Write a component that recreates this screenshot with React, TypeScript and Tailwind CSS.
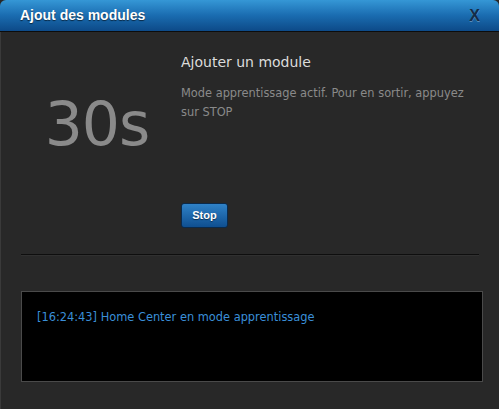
export default function App() {
	return (
		<div className="w-[499px] h-[409px] flex flex-col bg-[#282828] overflow-hidden" style={{ fontFamily: '"DejaVu Sans", Verdana, sans-serif' }}>
			{/* barre de titre */}
			<div className="h-[32px] shrink-0 flex items-center justify-between pl-[20px] pr-[19px] rounded-t-[6px] bg-gradient-to-b from-[#3597d6] via-[#1a6cb0] to-[#0d4a88] border-b border-[#0c0c0c]">
				<span className="text-white text-[14px] font-bold [text-shadow:0_1px_1px_rgba(0,0,0,0.6)]" style={{ fontFamily: '"Liberation Sans", Arial, sans-serif' }}>
					Ajout des modules
				</span>
				<span className="text-[#142c48] text-[16px] font-bold [text-shadow:0_1px_0_rgba(255,255,255,0.3)]" style={{ fontFamily: '"Liberation Sans", Arial, sans-serif' }}>
					X
				</span>
			</div>

			<div className="flex-1 flex flex-col border-l border-[#3a3a3a]">
				<div className="flex h-[222px] shrink-0">
					<div className="w-[180px] shrink-0 flex justify-center pt-[62px] pl-[12px]">
						<span className="text-[#8a8a8a] text-[60px] leading-none tracking-[-1px]">30s</span>
					</div>
					<div className="flex-1 flex flex-col items-start pt-[20px]">
						<h2 className="text-[#dcdcdc] text-[14px] leading-[20px]">Ajouter un module</h2>
						<p className="mt-[12px] w-[292px] text-[#8a8a8a] text-[11.4px] leading-[19px]">
							Mode apprentissage actif. Pour en sortir, appuyez sur STOP
						</p>
						<button className="mt-[81px] w-[47px] h-[25px] rounded-[3px] border border-[#0a2a4c] bg-gradient-to-b from-[#2f82c8] to-[#0f4f90] text-white text-[11px] font-bold [text-shadow:0_1px_1px_rgba(0,0,0,0.5)]" style={{ fontFamily: '"Liberation Sans", Arial, sans-serif' }}>
							Stop
						</button>
					</div>
				</div>

				<div className="ml-[20px] w-[458px] shrink-0 border-t border-[#0e0e0e] border-b-[1px] border-b-[#303030]" />

				<div className="mt-[35px] ml-[20px] w-[462px] h-[91px] shrink-0 bg-black border border-[#4a4a4a] pt-[12px] pl-[15px]">
					<span className="text-[#3a8fd8] text-[11.4px]">[16:24:43] Home Center en mode apprentissage</span>
				</div>
			</div>
		</div>
	);
}
